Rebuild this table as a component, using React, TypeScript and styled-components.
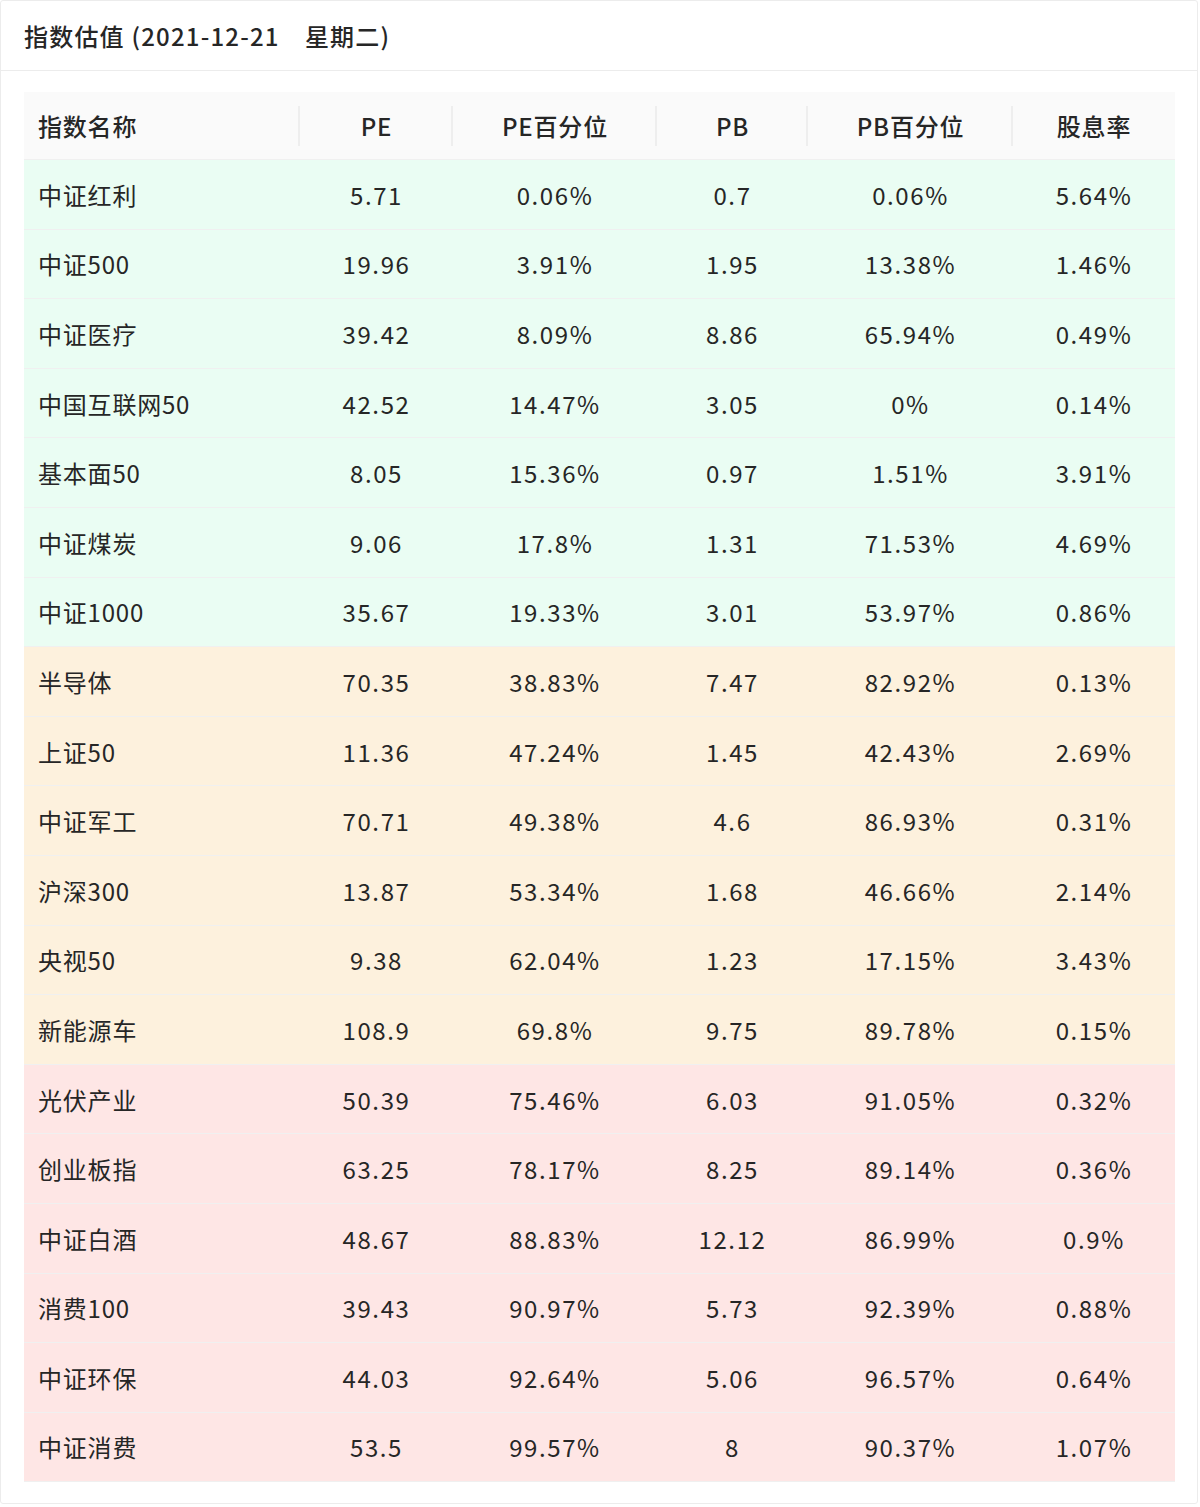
import styled, { createGlobalStyle } from "styled-components";

const GlobalStyle = createGlobalStyle`
  html, body {
    margin: 0;
    padding: 0;
    background: #fff;
  }
  body {
    font-family: "Noto Sans CJK SC", "Noto Sans", sans-serif;
    color: #262626;
  }
`;

type Level = "low" | "mid" | "high";

const rowColors: Record<Level, string> = {
  low: "#eafdf3",
  mid: "#fdf1dd",
  high: "#fee6e5",
};

const Card = styled.div`
  width: 1198px;
  height: 1504px;
  box-sizing: border-box;
  border: 1px solid #ececec;
  border-radius: 3px;
  background: #fff;
`;

const CardHead = styled.div`
  height: 69px;
  display: flex;
  align-items: center;
  padding: 0 23px;
  border-bottom: 1px solid #ececec;
  font-size: 24px;
  font-weight: 500;
  letter-spacing: 1.2px;
  color: #262626;
  white-space: pre;
`;

const CardBody = styled.div`
  padding: 21px 23px 0 23px;
`;

const Table = styled.table`
  width: 1151px;
  border-collapse: collapse;
  table-layout: fixed;
  font-size: 24px;
`;

const HeadCell = styled.th<{ $left?: boolean; $divider?: boolean }>`
  position: relative;
  height: 67px;
  padding: 0 14px;
  background: #fafafa;
  border-bottom: 1px solid #f0f0f0;
  font-weight: 500;
  color: #262626;
  letter-spacing: 0.8px;
  text-align: ${(p) => (p.$left ? "left" : "center")};

  &::before {
    content: "";
    display: ${(p) => (p.$divider ? "block" : "none")};
    position: absolute;
    right: 0;
    top: 50%;
    width: 2px;
    height: 40px;
    transform: translateY(-50%);
    background: #eeeeee;
  }
`;

const Row = styled.tr<{ $level: Level }>`
  background: ${(p) => rowColors[p.$level]};
`;

const Cell = styled.td<{ $left?: boolean }>`
  height: 68.6px;
  padding: 0 14px;
  border-bottom: 1px solid #f0f0f0;
  text-align: ${(p) => (p.$left ? "left" : "center")};
  color: #262626;
  letter-spacing: ${(p) => (p.$left ? "0.8px" : "1.6px")};
  white-space: nowrap;
`;

const columns = ["指数名称", "PE", "PE百分位", "PB", "PB百分位", "股息率"];
const widths = [276, 153, 204, 151, 205, 162];

const data: [string, string, string, string, string, string, Level][] = [
  ["中证红利", "5.71", "0.06%", "0.7", "0.06%", "5.64%", "low"],
  ["中证500", "19.96", "3.91%", "1.95", "13.38%", "1.46%", "low"],
  ["中证医疗", "39.42", "8.09%", "8.86", "65.94%", "0.49%", "low"],
  ["中国互联网50", "42.52", "14.47%", "3.05", "0%", "0.14%", "low"],
  ["基本面50", "8.05", "15.36%", "0.97", "1.51%", "3.91%", "low"],
  ["中证煤炭", "9.06", "17.8%", "1.31", "71.53%", "4.69%", "low"],
  ["中证1000", "35.67", "19.33%", "3.01", "53.97%", "0.86%", "low"],
  ["半导体", "70.35", "38.83%", "7.47", "82.92%", "0.13%", "mid"],
  ["上证50", "11.36", "47.24%", "1.45", "42.43%", "2.69%", "mid"],
  ["中证军工", "70.71", "49.38%", "4.6", "86.93%", "0.31%", "mid"],
  ["沪深300", "13.87", "53.34%", "1.68", "46.66%", "2.14%", "mid"],
  ["央视50", "9.38", "62.04%", "1.23", "17.15%", "3.43%", "mid"],
  ["新能源车", "108.9", "69.8%", "9.75", "89.78%", "0.15%", "mid"],
  ["光伏产业", "50.39", "75.46%", "6.03", "91.05%", "0.32%", "high"],
  ["创业板指", "63.25", "78.17%", "8.25", "89.14%", "0.36%", "high"],
  ["中证白酒", "48.67", "88.83%", "12.12", "86.99%", "0.9%", "high"],
  ["消费100", "39.43", "90.97%", "5.73", "92.39%", "0.88%", "high"],
  ["中证环保", "44.03", "92.64%", "5.06", "96.57%", "0.64%", "high"],
  ["中证消费", "53.5", "99.57%", "8", "90.37%", "1.07%", "high"],
];

export default function App() {
  return (
    <>
      <GlobalStyle />
      <Card>
        <CardHead>{"指数估值 (2021-12-21　星期二)"}</CardHead>
        <CardBody>
          <Table>
            <colgroup>
              {widths.map((w, i) => (
                <col key={i} style={{ width: w }} />
              ))}
            </colgroup>
            <thead>
              <tr>
                {columns.map((c, i) => (
                  <HeadCell
                    key={c}
                    $left={i === 0}
                    $divider={i < columns.length - 1}
                  >
                    {c}
                  </HeadCell>
                ))}
              </tr>
            </thead>
            <tbody>
              {data.map((r) => (
                <Row key={r[0]} $level={r[6]}>
                  <Cell $left>{r[0]}</Cell>
                  <Cell>{r[1]}</Cell>
                  <Cell>{r[2]}</Cell>
                  <Cell>{r[3]}</Cell>
                  <Cell>{r[4]}</Cell>
                  <Cell>{r[5]}</Cell>
                </Row>
              ))}
            </tbody>
          </Table>
        </CardBody>
      </Card>
    </>
  );
}
